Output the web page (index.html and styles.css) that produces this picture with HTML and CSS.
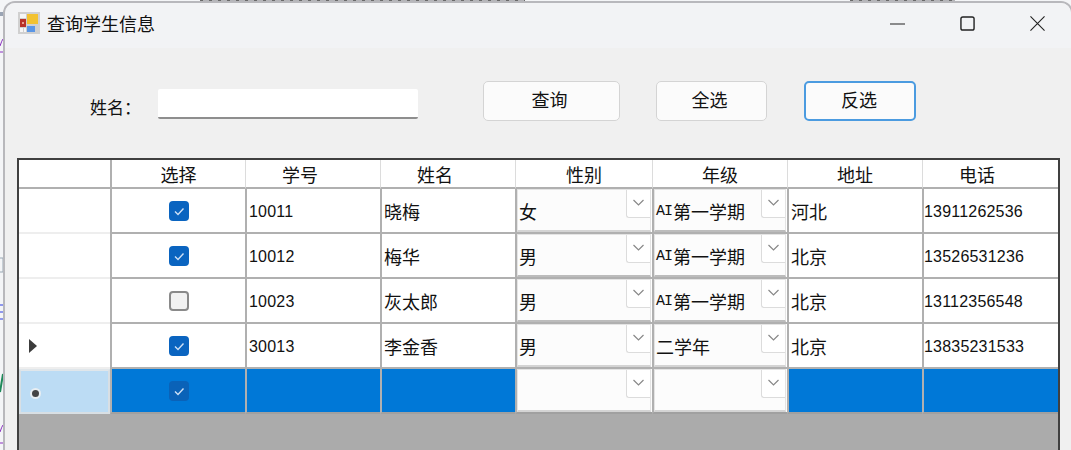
FILE: index.html
```html
<!DOCTYPE html>
<html lang="zh">
<head>
<meta charset="utf-8">
<title>查询学生信息</title>
<link rel="stylesheet" href="styles.css">
</head>
<body>
<svg class="desktop" width="1071" height="450" viewBox="0 0 1071 450" aria-hidden="true">
  <rect x="0" y="12" width="3" height="4" fill="#9aa4b4"/>
  <path d="M0 46Q2 40 3 39M0 52H3" stroke="#8a2fc0" stroke-width="1" fill="none"/>
  <path d="M0 258H3M0 272H3M3 258V272" stroke="#9aa8b4" stroke-width="1" fill="none"/>
  <path d="M0 305H3M0 312H3M0 319H3" stroke="#2a3ae0" stroke-width="1" fill="none"/>
  <path d="M0 392L3 374" stroke="#1f8a5a" stroke-width="2" fill="none"/>
  <path d="M0 432Q2 426 3 425M0 443H3" stroke="#8a2fc0" stroke-width="1" fill="none"/>
</svg>
<div class="strip strip-a"></div>
<div class="strip strip-b"></div>
<div class="window">
  <header class="titlebar">
    <svg class="app-icon" width="22" height="22" viewBox="0 0 22 22">
      <rect width="22" height="22" fill="#d0d0d0"/>
      <rect x="2" y="2" width="6" height="4" fill="#f6f6f6"/>
      <rect x="2" y="7" width="6" height="8" fill="#b8322a"/>
      <rect x="4" y="10" width="2" height="2" fill="#e8a090"/>
      <rect x="2" y="16" width="3" height="4" fill="#f6f6f6"/>
      <rect x="6" y="16" width="2" height="4" fill="#f6f6f6"/>
      <rect x="9" y="2" width="11" height="10" fill="#f2c230"/>
      <rect x="9" y="14" width="8" height="6" fill="#5a96e6"/>
    </svg>
    <span class="title">查询学生信息</span>
    <div class="controls">
      <svg width="15" height="15" viewBox="0 0 16 16"><path d="M0 8.5H16" stroke="#222" stroke-width="1.1"/></svg>
      <svg width="15" height="15" viewBox="0 0 16 16"><rect x="1" y="1" width="14" height="14" rx="2" fill="none" stroke="#222" stroke-width="1.5"/></svg>
      <svg width="15" height="15" viewBox="0 0 16 16"><path d="M0.5 0.5L15.5 15.5M15.5 0.5L0.5 15.5" stroke="#222" stroke-width="1.2"/></svg>
    </div>
  </header>
  <section class="search">
    <label class="name-label">姓名：</label>
    <div class="input"></div>
    <button class="btn btn-query">查询</button>
    <button class="btn btn-all">全选</button>
    <button class="btn btn-inv">反选</button>
  </section>
  <section class="grid">
    <div class="head corner"></div>
    <div class="head">选择</div>
    <div class="head pad">学号</div>
    <div class="head pad">姓名</div>
    <div class="head">性别</div>
    <div class="head">年级</div>
    <div class="head">地址</div>
    <div class="head pad">电话</div>

    <div class="rowhead"></div>
    <div class="cell center"><span class="check on"><svg viewBox="0 0 20 20"><path d="M6 10.5l3 3 5.5-6"/></svg></span></div>
    <div class="cell num">10011</div>
    <div class="cell txt">晓梅</div>
    <div class="cell combo"><div class="box">女<i class="drop"><svg viewBox="0 0 12 7"><path d="M1 1l5 5 5-5"/></svg></i></div></div>
    <div class="cell combo"><div class="box dk"><span class="mono">AI</span>第一学期<i class="drop"><svg viewBox="0 0 12 7"><path d="M1 1l5 5 5-5"/></svg></i></div></div>
    <div class="cell txt">河北</div>
    <div class="cell num phone">13911262536</div>

    <div class="rowhead"></div>
    <div class="cell center"><span class="check on"><svg viewBox="0 0 20 20"><path d="M6 10.5l3 3 5.5-6"/></svg></span></div>
    <div class="cell num">10012</div>
    <div class="cell txt">梅华</div>
    <div class="cell combo"><div class="box dk">男<i class="drop"><svg viewBox="0 0 12 7"><path d="M1 1l5 5 5-5"/></svg></i></div></div>
    <div class="cell combo"><div class="box dk"><span class="mono">AI</span>第一学期<i class="drop"><svg viewBox="0 0 12 7"><path d="M1 1l5 5 5-5"/></svg></i></div></div>
    <div class="cell txt">北京</div>
    <div class="cell num phone">13526531236</div>

    <div class="rowhead"></div>
    <div class="cell center"><span class="check"></span></div>
    <div class="cell num">10023</div>
    <div class="cell txt">灰太郎</div>
    <div class="cell combo"><div class="box dk">男<i class="drop"><svg viewBox="0 0 12 7"><path d="M1 1l5 5 5-5"/></svg></i></div></div>
    <div class="cell combo"><div class="box dk"><span class="mono">AI</span>第一学期<i class="drop"><svg viewBox="0 0 12 7"><path d="M1 1l5 5 5-5"/></svg></i></div></div>
    <div class="cell txt">北京</div>
    <div class="cell num phone">13112356548</div>

    <div class="rowhead"><svg class="arrow" width="8" height="14" viewBox="0 0 8 14"><path d="M0 0L8 7L0 14Z" fill="#3c3c3c"/></svg></div>
    <div class="cell center"><span class="check on"><svg viewBox="0 0 20 20"><path d="M6 10.5l3 3 5.5-6"/></svg></span></div>
    <div class="cell num">30013</div>
    <div class="cell txt">李金香</div>
    <div class="cell combo"><div class="box">男<i class="drop"><svg viewBox="0 0 12 7"><path d="M1 1l5 5 5-5"/></svg></i></div></div>
    <div class="cell combo"><div class="box">二学年<i class="drop"><svg viewBox="0 0 12 7"><path d="M1 1l5 5 5-5"/></svg></i></div></div>
    <div class="cell txt">北京</div>
    <div class="cell num phone">13835231533</div>

    <div class="rowhead newrow"><span class="star"></span></div>
    <div class="cell center sel"><span class="check on dim"><svg viewBox="0 0 20 20"><path d="M6 10.5l3 3 5.5-6"/></svg></span></div>
    <div class="cell sel"></div>
    <div class="cell sel"></div>
    <div class="cell combo sel"><div class="box"><i class="drop"><svg viewBox="0 0 12 7"><path d="M1 1l5 5 5-5"/></svg></i></div></div>
    <div class="cell combo sel"><div class="box"><i class="drop"><svg viewBox="0 0 12 7"><path d="M1 1l5 5 5-5"/></svg></i></div></div>
    <div class="cell sel"></div>
    <div class="cell sel"></div>
  </section>
</div>
</body>
</html>
```
FILE: styles.css
```css
* { box-sizing: border-box; }
html, body { margin: 0; height: 100%; overflow: hidden; }
body {
  background: #f4f5f7;
  padding: 3px 0 0 5px;
  font-family: "Noto Sans CJK SC", "Liberation Sans", sans-serif;
  color: #111;
  position: relative;
}
.desktop { position: absolute; left: 0; top: 0; }
.strip {
  position: absolute;
  top: 0;
  height: 2px;
  background: repeating-linear-gradient(90deg, #6a6a6a 0 3px, #b4b4b8 3px 9px);
}
.strip-a { left: 200px; width: 325px; }
.strip-b { left: 850px; width: 105px; }
.window {
  position: relative;
  width: 1066px;
  height: 447px;
  background: #f0f0f0;
  box-shadow: 0 0 0 2px #b8b8bc;
  border-radius: 10px 10px 0 0;
  overflow: hidden;
}
.titlebar {
  height: 45px;
  background: #f2f3f5;
  display: flex;
  align-items: center;
  padding-left: 13px;
}
.app-icon { flex: none; margin-top: -5px; }
.title { font-size: 18px; margin-left: 7px; margin-top: -5px; color: #111; }
.controls {
  margin-left: auto;
  display: flex;
  gap: 55px;
  padding-right: 26px;
  margin-top: -4px;
}
.search {
  height: 110px;
  display: flex;
  align-items: flex-start;
}
.name-label {
  font-family: "Noto Sans CJK TC", sans-serif;
  font-size: 17px;
  margin: 47px 0 0 85px;
  width: 68px;
  line-height: 24px;
}
.input {
  width: 260px;
  height: 30px;
  margin-top: 41px;
  background: #fff;
  border-bottom: 2px solid #8e8e8e;
  border-radius: 2px;
}
.btn {
  height: 40px;
  margin-top: 33px;
  background: #fbfbfb;
  border: 1px solid #d4d4d4;
  border-radius: 5px;
  font: inherit;
  font-size: 18px;
  line-height: 1;
  color: #111;
  padding: 0 4px 5px 0;
}
.btn-query { width: 137px; margin-left: 65px; }
.btn-all { width: 111px; margin-left: 36px; }
.btn-inv { width: 112px; margin-left: 37px; border: 2px solid #4b9be0; padding-right: 2px; }
.grid {
  width: 1043px;
  height: 292px;
  margin-left: 12px;
  background: #ababab;
  border: 2px solid #404040;
  border-bottom: 0;
  display: grid;
  grid-template-columns: 91px 135px 135px 135px 137px 135px 135px 1fr;
  grid-template-rows: 29px repeat(5, 45px);
  align-content: start;
  font-size: 16px;
}
.head {
  background: #fff;
  border-left: 1px solid #dcdcdc;
  border-bottom: 2px solid #b0b0b0;
  display: flex;
  align-items: center;
  justify-content: center;
  font-size: 18px;
}
.head.pad { justify-content: flex-start; padding-left: 36px; }
.head.corner { border-left: 0; }
.head:nth-child(2) { border-left: 2px solid #b0b0b0; }
.rowhead {
  background: #fff;
  border-bottom: 2px solid #eeeeee;
  display: flex;
  align-items: center;
  padding-left: 10px;
}
.rowhead.newrow {
  background: #bcdcf4;
  border: 2px solid #d8dfe4;
  border-top-color: #e0e6ea;
  padding-left: 9px;
}
.arrow { margin-top: 1px; }
.star {
  width: 7px;
  height: 7px;
  margin: 3px 0 0 2px;
  border-radius: 50%;
  background: #444;
  box-shadow: 0 0 0 2px #e8eef2;
}
.cell {
  background: #fff;
  border-left: 2px solid #b0b0b0;
  border-bottom: 2px solid #b0b0b0;
  display: flex;
  align-items: center;
  min-width: 0;
}
.center { justify-content: center; }
.num { font-family: "Liberation Sans", sans-serif; font-size: 16px; letter-spacing: 0.2px; padding: 3px 0 0 2px; }
.phone { padding-left: 0; }
.txt { font-size: 18px; padding-left: 2px; }
.sel { background: #0078d7; border-bottom-color: #a0a0a0; }
.check {
  width: 20px;
  height: 20px;
  border-radius: 4px;
  background: #f2f2f2;
  border: 2px solid #8a8a8a;
  display: block;
}
.check.on { background: #0a64c0; border: 0; }
.check.dim { background: #0a62b8; }
.check svg { display: block; width: 20px; height: 20px; }
.check path { fill: none; stroke: #cfe0f5; stroke-width: 1.4; }
.combo { padding: 0 1px 0 0; background: #fff; }
.combo.sel { background: #fcfcfc; }
.box {
  width: 100%;
  height: 100%;
  background: #fcfcfc;
  border: 1px solid #e4e4e4;
  border-bottom: 2px solid #d4d4d4;
  position: relative;
  display: flex;
  align-items: center;
  padding: 2px 0 0 1px;
  font-size: 18px;
  white-space: nowrap;
  overflow: hidden;
}
.box.dk { border-bottom: 2px solid #bcbcbc; }
.mono { font-family: "Liberation Mono", monospace; font-size: 15px; letter-spacing: -1px; margin-right: 1px; }
.drop {
  position: absolute;
  top: 0;
  right: 0;
  width: 24px;
  height: 28px;
  background: #fff;
  border-left: 1px solid #dcdcdc;
  border-bottom: 1px solid #dcdcdc;
  border-radius: 0 0 0 3px;
  display: flex;
  align-items: center;
  justify-content: center;
  padding-bottom: 3px;
}
.drop svg { width: 13px; height: 7px; }
.drop path { fill: none; stroke: #888; stroke-width: 1.2; }
```
